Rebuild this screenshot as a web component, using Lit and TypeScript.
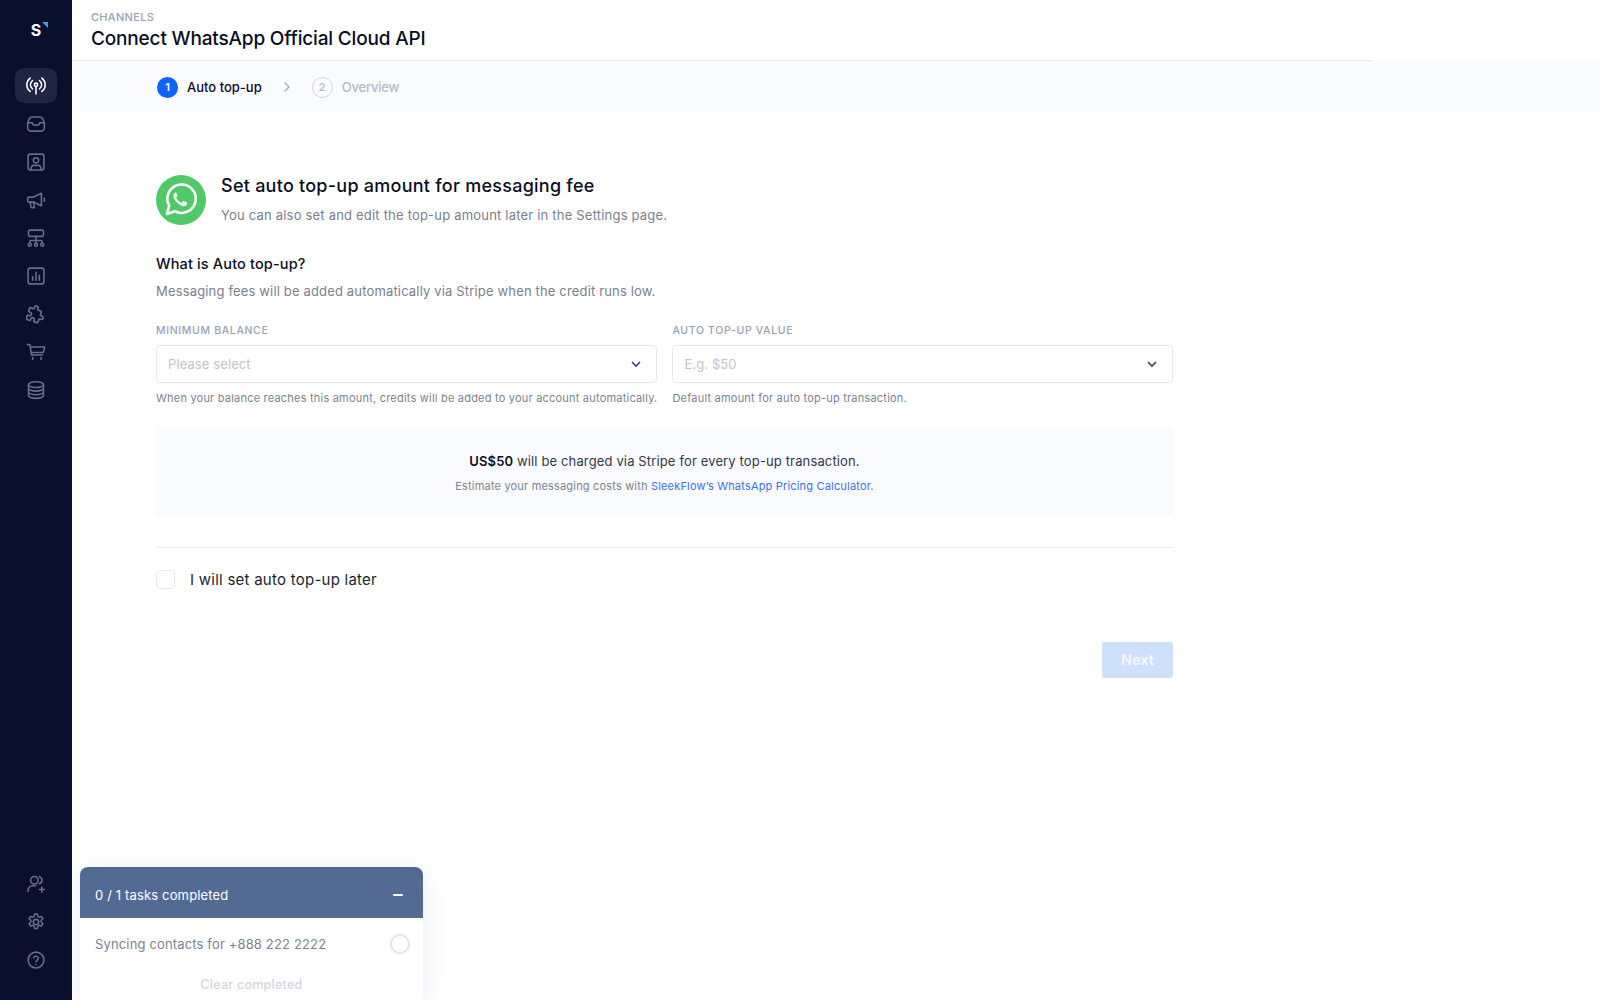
import { LitElement, html, css, svg } from 'lit';
import { customElement } from 'lit/decorators.js';

const navIcons = [
  svg`<circle cx="12" cy="10.500" r="2"/><path d="M12 12.500V21.500M7.800 15.500a6.200 6.200 0 0 1 0-10M16.200 5.500a6.200 6.200 0 0 1 0 10M5 18.500a10 10 0 0 1 0-16M19 2.500a10 10 0 0 1 0 16"/>`,
  svg`<path d="M7.500 3.500h9a4 4 0 0 1 3.600 2.300L22 10.500v6a4 4 0 0 1-4 4H6a4 4 0 0 1-4-4v-6l1.900-4.700A4 4 0 0 1 7.500 3.500Z"/><path d="M2.500 10.500h5a4.500 3 0 0 0 9 0h5"/>`,
  svg`<rect x="2.500" y="2.500" width="19" height="19" rx="2.500"/><circle cx="12" cy="10" r="3.200"/><path d="M6 21.500v-2a3.500 3.500 0 0 1 3.500-3.500h5a3.500 3.500 0 0 1 3.500 3.500v2"/>`,
  svg`<path d="M3.500 8.500H9l9.500-4.500v15L9 14.500H3.500a1.500 1.500 0 0 1-1.500-1.500v-3a1.500 1.500 0 0 1 1.500-1.500Z"/><path d="M5 14.500l.8 5.500a1.500 1.500 0 0 0 1.500 1.300H10l-1-6.800M22 10v3.500"/>`,
  svg`<rect x="3" y="2.500" width="18" height="7.500" rx="1.800"/><path d="M12 10v8M4.500 18v-1a2 2 0 0 1 2-2h11a2 2 0 0 1 2 2v1"/><circle cx="4.500" cy="20" r="1.800"/><circle cx="12" cy="20" r="1.800"/><circle cx="19.500" cy="20" r="1.800"/>`,
  svg`<rect x="2.500" y="2.500" width="19" height="19" rx="2.500"/><path d="M8 17v-4M12 17V7.500M16 17v-6"/>`,
  svg`<g transform="rotate(18 12 12) translate(-0.500 -0.500) scale(1.050)"><path d="M4 7h3a1 1 0 0 0 1-1V5a2 2 0 0 1 4 0v1a1 1 0 0 0 1 1h3a1 1 0 0 1 1 1v3a1 1 0 0 0 1 1h1a2 2 0 0 1 0 4h-1a1 1 0 0 0-1 1v3a1 1 0 0 1-1 1h-3a1 1 0 0 1-1-1v-1a2 2 0 0 0-4 0v1a1 1 0 0 1-1 1H4a1 1 0 0 1-1-1v-3a1 1 0 0 1 1-1h1a2 2 0 0 0 0-4H4a1 1 0 0 1-1-1V8a1 1 0 0 1 1-1"/></g>`,
  svg`<path d="M1.500 3h3l2.200 12.500h13.300M5.200 6h17.300l-1.700 6.500H6.300"/><path d="M8 18.500v2.500M18 18.500v2.500"/>`,
  svg`<ellipse cx="12" cy="5.500" rx="9" ry="3.500"/><path d="M3 5.500v13c0 1.900 4 3.500 9 3.500s9-1.600 9-3.500v-13M3 9.800c0 1.900 4 3.500 9 3.500s9-1.600 9-3.500M3 14.200c0 1.900 4 3.500 9 3.500s9-1.600 9-3.500"/>`,
];

const bottomIcons = [
  svg`<circle cx="10" cy="7.500" r="4.500"/><path d="M2.500 21v-1.500a5.500 5.500 0 0 1 5.500-5.500h3.500M16 3.200a4.500 4.500 0 0 1 0 8.600M19 15.500v6M16 18.500h6"/>`,
  svg`<circle cx="12" cy="12" r="3.200"/><path d="M10.300 2.500h3.400l.6 2.800 1.600.9 2.700-.9 1.700 3-2.100 1.900v1.800l2.100 1.900-1.700 3-2.700-.9-1.600.9-.6 2.800h-3.400l-.6-2.800-1.600-.9-2.700.9-1.700-3 2.100-1.900v-1.800L3.700 8.300l1.700-3 2.700.9 1.600-.9.6-2.800Z"/>`,
  svg`<circle cx="12" cy="12" r="9.500"/><path d="M9.200 9.300a2.900 2.900 0 0 1 5.600 1c0 2-2.800 2.400-2.800 4"/><path d="M12 17.300v.2"/>`,
];

const chevron = html`<svg class="chev" viewBox="0 0 12 12"><path d="M2 4l4 4 4-4"/></svg>`;

@customElement('app-root')
export class AppRoot extends LitElement {
  static styles = css`
    :host {
      display: flex;
      height: 1000px;
      overflow: hidden;
      position: relative;
      background: #fff;
      font-family: Inter, 'Liberation Sans', sans-serif;
      color: #0b0e1f;
    }
    .side {
      width: 72px;
      flex: none;
      background: #0a0f2d;
      display: flex;
      flex-direction: column;
      align-items: center;
      padding: 18px 0 23px;
      box-sizing: border-box;
    }
    .logo {
      position: relative;
      width: 24px;
      height: 24px;
      color: #fff;
      font: 700 16px/25px Inter, sans-serif;
      text-align: center;
      margin-bottom: 26px;
    }
    .logo i {
      position: absolute;
      right: 0;
      top: 4px;
      border-top: 6px solid #3f9ee8;
      border-left: 6px solid transparent;
    }
    .nav {
      display: flex;
      flex-direction: column;
      align-items: center;
      gap: 3px;
    }
    .nav.bottom {
      margin-top: auto;
    }
    .nav a {
      width: 42px;
      height: 35px;
      border-radius: 9px;
      display: flex;
      align-items: center;
      justify-content: center;
      color: #666d8b;
    }
    .nav a.on {
      background: #1e2542;
      color: #fff;
    }
    .nav svg {
      width: 20px;
      height: 20px;
      fill: none;
      stroke: currentColor;
      stroke-width: 1.900;
      stroke-linecap: round;
      stroke-linejoin: round;
    }
    .main {
      flex: 1;
      min-width: 0;
    }
    .top {
      width: 1301px;
      height: 61px;
      box-sizing: border-box;
      padding: 10px 0 0 19px;
      border-bottom: 1px solid #e4e8f2;
    }
    .crumb {
      font-size: 11px;
      line-height: 14px;
      font-weight: 500;
      color: #9aa1b7;
      letter-spacing: 0.3px;
    }
    h1 {
      margin: 3px 0 0;
      font-size: 19px;
      line-height: 24px;
      font-weight: 500;
      letter-spacing: -0.17px;
      color: #0b0e1f;
    }
    .steps {
      height: 52px;
      background: #fafbff;
      display: flex;
      align-items: center;
      padding-left: 85px;
      font-size: 13px;
      font-weight: 500;
    }
    .num {
      width: 21px;
      height: 21px;
      border-radius: 50%;
      background: #0f62fe;
      color: #fff;
      font-size: 11px;
      font-weight: 600;
      display: flex;
      align-items: center;
      justify-content: center;
      margin-right: 9px;
    }
    .num.off {
      background: none;
      box-sizing: border-box;
      border: 1.500px solid #d3d6de;
      color: #b8bcc9;
    }
    .off-text {
      color: #b4b9c8;
      letter-spacing: -0.2px;
    }
    .next-arrow {
      width: 12px;
      height: 12px;
      margin: 0 19px 0 19px;
      fill: none;
      stroke: #a9aebd;
      stroke-width: 1.400;
    }
    .body {
      width: 1017px;
      margin-left: 84px;
      padding-top: 62px;
    }
    .head {
      display: flex;
      gap: 15px;
    }
    .wa {
      width: 50px;
      height: 50px;
      flex: none;
    }
    h2 {
      margin: 0;
      font-size: 18px;
      line-height: 22px;
      font-weight: 500;
      letter-spacing: 0.25px;
      color: #0b0e1f;
    }
    .sub {
      margin-top: 9px;
      font-size: 13px;
      line-height: 18px;
      letter-spacing: 0.2px;
      color: #7b8090;
    }
    h3 {
      margin: 29px 0 0;
      font-size: 14.500px;
      line-height: 20px;
      font-weight: 500;
      letter-spacing: 0.15px;
      color: #0b0e1f;
    }
    .sub.tight {
      margin-top: 8px;
      letter-spacing: 0.16px;
    }
    .fields {
      display: grid;
      grid-template-columns: 1fr 1fr;
      gap: 15px;
      margin-top: 24px;
    }
    label {
      display: block;
      font-size: 10.500px;
      line-height: 14px;
      font-weight: 500;
      letter-spacing: 0.65px;
      color: #9aa1b7;
      margin-bottom: 7px;
    }
    .select {
      height: 38px;
      box-sizing: border-box;
      border: 1px solid #e4e7f0;
      border-radius: 4px;
      display: flex;
      align-items: center;
      justify-content: space-between;
      padding: 0 14px 0 11px;
      font-size: 13px;
      letter-spacing: 0.1px;
      color: #c1c4cf;
    }
    .chev {
      width: 12px;
      height: 12px;
      fill: none;
      stroke: #34466e;
      stroke-width: 1.600;
    }
    .help {
      margin-top: 8px;
      font-size: 11px;
      line-height: 14px;
      letter-spacing: 0.21px;
      color: #7d8292;
      white-space: nowrap;
    }
    .panel {
      margin-top: 24px;
      height: 87px;
      background: #fafbff;
      border-radius: 4px;
      box-sizing: border-box;
      padding-top: 23px;
      text-align: center;
    }
    .panel p {
      margin: 0;
      font-size: 13px;
      line-height: 18px;
      letter-spacing: 0.14px;
      color: #33384a;
    }
    .panel b {
      font-weight: 600;
      color: #0b0e1f;
    }
    .panel small {
      display: block;
      margin-top: 9px;
      font-size: 11px;
      line-height: 14px;
      letter-spacing: 0.18px;
      color: #7d8292;
    }
    .panel a {
      color: #3a72dc;
    }
    hr {
      margin: 31px 0 0;
      border: 0;
      border-top: 1px solid #e8eaf1;
    }
    .check {
      display: flex;
      align-items: center;
      gap: 15px;
      margin-top: 21px;
      font-size: 15px;
      line-height: 20px;
      letter-spacing: 0.25px;
      color: #1b1f30;
    }
    .check span {
      padding-top: 1px;
    }
    .check i {
      width: 19px;
      height: 19px;
      box-sizing: border-box;
      border: 1px solid #e4e7f0;
      border-radius: 4px;
    }
    .actions {
      display: flex;
      justify-content: flex-end;
      margin-top: 52px;
    }
    .btn {
      width: 71px;
      height: 36px;
      box-sizing: border-box;
      padding-bottom: 1px;
      border-radius: 3px;
      background: #cfe0fd;
      color: #f4f8ff;
      font-size: 14.500px;
      font-weight: 600;
      display: flex;
      align-items: center;
      justify-content: center;
    }
    .tasks {
      position: absolute;
      left: 80px;
      top: 867px;
      width: 343px;
      height: 133px;
      border-radius: 8px 8px 0 0;
      background: #fff;
      box-shadow: 0 4px 24px rgba(90, 110, 180, 0.14);
    }
    .tasks header {
      height: 51px;
      box-sizing: border-box;
      padding: 5px 20px 0 15px;
      background: #536b92;
      border-radius: 8px 8px 0 0;
      color: #fff;
      font-size: 13px;
      letter-spacing: 0.15px;
      display: flex;
      align-items: center;
      justify-content: space-between;
    }
    .tasks header i {
      width: 10px;
      height: 2px;
      background: #fff;
      border-radius: 1px;
    }
    .row {
      height: 51px;
      display: flex;
      align-items: center;
      justify-content: space-between;
      padding: 0 13.500px 0 15px;
      font-size: 13px;
      letter-spacing: 0.15px;
      color: #7d8292;
    }
    .row i {
      width: 20px;
      height: 20px;
      box-sizing: border-box;
      border: 2px solid #e2e5ee;
      border-radius: 50%;
    }
    .clear {
      margin-top: 8px;
      text-align: center;
      font-size: 12.500px;
      line-height: 16px;
      font-weight: 500;
      letter-spacing: 0.25px;
      color: #d3d6df;
    }
  `;

  render() {
    return html`
      <aside class="side">
        <div class="logo">S<i></i></div>
        <nav class="nav">
          ${navIcons.map((icon, i) => html`<a class=${i === 0 ? 'on' : ''}><svg viewBox="0 0 24 24">${icon}</svg></a>`)}
        </nav>
        <nav class="nav bottom">
          ${bottomIcons.map(icon => html`<a><svg viewBox="0 0 24 24">${icon}</svg></a>`)}
        </nav>
      </aside>
      <main class="main">
        <div class="top">
          <div class="crumb">CHANNELS</div>
          <h1>Connect WhatsApp Official Cloud API</h1>
        </div>
        <div class="steps">
          <span class="num">1</span>
          <span>Auto top-up</span>
          <svg class="next-arrow" viewBox="0 0 12 12"><path d="M3.500 1.500L8 6l-4.500 4.500"/></svg>
          <span class="num off">2</span>
          <span class="off-text">Overview</span>
        </div>
        <section class="body">
          <div class="head">
            <svg class="wa" viewBox="0 0 50 50">
              <circle cx="25" cy="25" r="25" fill="#51c968"/>
              <path d="M11 39l2.200-8.300a14.200 14.200 0 1 1 5.600 5.500Z" fill="none" stroke="#fff" stroke-width="2.600" stroke-linejoin="round"/>
              <path d="M20.400 17.300c-.5 0-1.300.3-1.900 1-.8.9-1.200 2-1 3.300.3 2 1.500 3.900 3.200 5.700 2 2 4 3.300 6.200 3.800 1.300.3 2.500 0 3.400-.8.600-.6.900-1.300.9-2 0-.4-.1-.6-.4-.8l-3-1.400c-.3-.1-.6-.1-.8.200l-1 1.300c-.2.200-.5.300-.8.200-1-.4-2-1-3-2-1-.9-1.600-1.800-2-2.700-.1-.3 0-.6.200-.8l.8-1c.2-.3.200-.5.100-.8l-1.200-2.900c-.2-.2-.400-.3-.7-.3Z" fill="#fff"/>
            </svg>
            <div>
              <h2>Set auto top-up amount for messaging fee</h2>
              <div class="sub">You can also set and edit the top-up amount later in the Settings page.</div>
            </div>
          </div>
          <h3>What is Auto top-up?</h3>
          <div class="sub tight">Messaging fees will be added automatically via Stripe when the credit runs low.</div>
          <div class="fields">
            <div>
              <label>MINIMUM BALANCE</label>
              <div class="select"><span>Please select</span>${chevron}</div>
              <div class="help">When your balance reaches this amount, credits will be added to your account automatically.</div>
            </div>
            <div>
              <label>AUTO TOP-UP VALUE</label>
              <div class="select"><span>E.g. $50</span>${chevron}</div>
              <div class="help">Default amount for auto top-up transaction.</div>
            </div>
          </div>
          <div class="panel">
            <p><b>US$50</b> will be charged via Stripe for every top-up transaction.</p>
            <small>Estimate your messaging costs with <a>SleekFlow’s WhatsApp Pricing Calculator.</a></small>
          </div>
          <hr />
          <div class="check"><i></i><span>I will set auto top-up later</span></div>
          <div class="actions"><div class="btn">Next</div></div>
        </section>
      </main>
      <div class="tasks">
        <header><span>0 / 1 tasks completed</span><i></i></header>
        <div class="row"><span>Syncing contacts for +888 222 2222</span><i></i></div>
        <div class="clear">Clear completed</div>
      </div>
    `;
  }
}
